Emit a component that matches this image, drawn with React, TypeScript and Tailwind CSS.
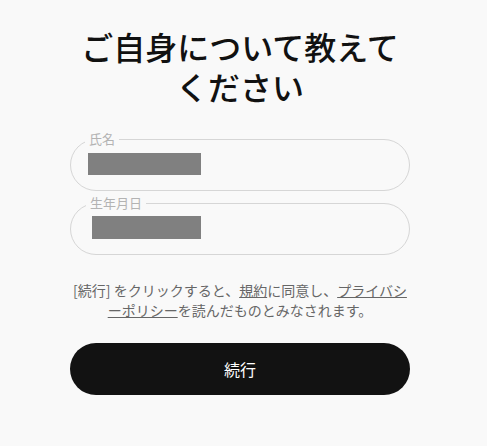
export default function App() {
    return (
        <div
            className="min-h-[446px] w-full bg-[#f9f9f9]"
            style={{ fontFamily: '"Noto Sans CJK JP", "Noto Sans", sans-serif' }}
        >
            <div className="ml-[70px] flex w-[340px] flex-col pt-[26px]">
                <h1 className="text-center text-[32px] font-medium leading-[40px] text-[#111]">
                    ご自身について教えてください
                </h1>

                {/* Form fields */}
                <div className="mt-[33px] flex flex-col gap-[12px]">
                    <div className="relative h-[52px] rounded-full border border-[#d6d6d6]">
                        <span className="absolute -top-[9px] left-[14px] bg-[#f9f9f9] px-[4px] text-[13px] leading-[16px] text-[#b3b3b3]">
                            氏名
                        </span>
                        <div className="absolute left-[17px] top-[13px] h-[22px] w-[113px] bg-[#808080]" />
                    </div>
                    <div className="relative h-[52px] rounded-full border border-[#d6d6d6]">
                        <span className="absolute -top-[9px] left-[15px] bg-[#f9f9f9] px-[4px] text-[13px] leading-[16px] text-[#b3b3b3]">
                            生年月日
                        </span>
                        <div className="absolute left-[21px] top-[12px] h-[23px] w-[109px] bg-[#808080]" />
                    </div>
                </div>

                <p className="mt-[25px] text-center text-[14px] leading-[20px] text-[#666]">
                    [続行] をクリックすると、<span className="underline">規約</span>に同意し、
                    <span className="underline">プライバシーポリシー</span>を読んだものとみなされます。
                </p>

                <button className="mt-[23px] h-[52px] w-full rounded-full bg-[#121212] text-[16px] text-white">
                    続行
                </button>
            </div>
        </div>
    );
}
